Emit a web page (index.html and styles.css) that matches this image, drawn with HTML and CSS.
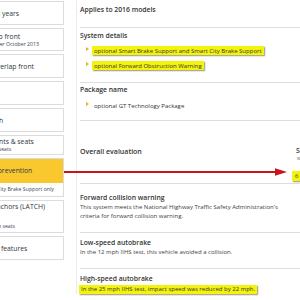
FILE: index.html
```html
<!DOCTYPE html>
<html lang="en">
<head>
<meta charset="utf-8">
<title>Front crash prevention</title>
<link rel="stylesheet" href="styles.css">
</head>
<body>
<div class="page">
  <nav class="sidebar">
    <div class="card"><div class="nav-title">Other model years</div></div>
    <div class="card two"><div class="nav-title">Small overlap front</div><div class="nav-sub">Vehicles built after October 2013</div></div>
    <div class="card"><div class="nav-title">Moderate overlap front</div></div>
    <div class="card"><div class="nav-title">Side</div></div>
    <div class="card"><div class="nav-title">Roof strength</div></div>
    <div class="card two short"><div class="nav-title">Head restraints &amp; seats</div><div class="nav-sub">Applies to front seats</div></div>
    <div class="card active">
      <div class="nav-head">Front crash prevention</div>
      <div class="nav-body"><div class="nav-sub">optional Smart City Brake Support only</div></div>
    </div>
    <div class="card latch"><div class="nav-title">Child seat anchors (LATCH)</div><div class="nav-sub tall">Ease of use</div><div class="nav-sub tall">2nd-row position seats</div></div>
    <div class="card"><div class="nav-title">Other safety features</div></div>
  </nav>

  <main class="content">
    <section class="sec sec-applies">
      <h2 class="heading">Applies to 2016 models</h2>
    </section>
    <section class="sec sec-details">
      <h3 class="heading">System details</h3>
      <ul class="items">
        <li><mark class="hl">optional Smart Brake Support and Smart City Brake Support</mark></li>
        <li><mark class="hl">optional Forward Obstruction Warning</mark></li>
      </ul>
    </section>
    <section class="sec sec-package">
      <h3 class="heading">Package name</h3>
      <ul class="items">
        <li><span class="plain">optional GT Technology Package</span></li>
      </ul>
    </section>
    <section class="sec sec-eval">
      <h3 class="heading eval-title">Overall evaluation</h3>
      <div class="rating">
        <div class="rating-title">Superior</div>
        <div class="rating-sub">with optional equipment</div>
        <mark class="hl score">6 points</mark>
      </div>
    </section>
    <section class="sec sec-fcw">
      <h3 class="heading">Forward collision warning</h3>
      <p class="body">This system meets the National Highway Traffic Safety Administration's criteria for forward collision warning.</p>
    </section>
    <section class="sec sec-low">
      <h3 class="heading">Low-speed autobrake</h3>
      <p class="body">In the 12 mph IIHS test, this vehicle avoided a collision.</p>
    </section>
    <section class="sec sec-high">
      <h3 class="heading">High-speed autobrake</h3>
      <p class="body tall"><mark class="hl">In the 25 mph IIHS test, impact speed was reduced by 22 mph.</mark></p>
    </section>
  </main>
</div>

<svg class="annotation" width="300" height="300" viewBox="0 0 300 300" aria-hidden="true">
  <line x1="64" y1="172" x2="279" y2="172" stroke="#c8161c" stroke-width="2"/>
  <polygon points="275,168.3 287,172 275,175.7" fill="#c8161c"/>
</svg>
</body>
</html>
```

FILE: styles.css
```css
* {
  box-sizing: border-box;
  margin: 0;
  padding: 0;
}

html,
body {
  width: 300px;
  height: 300px;
  overflow: hidden;
  background: #ffffff;
}

body {
  position: relative;
  font-family: "Open Sans", "Liberation Sans", sans-serif;
  color: #333333;
}

.page {
  display: flex;
  align-items: flex-start;
}

/* ---------- sidebar ---------- */
.sidebar {
  flex: none;
  width: 111px;
  margin-left: -47px;
  padding-top: 1px;
  display: flex;
  flex-direction: column;
  gap: 3px;
}

.card {
  min-height: 24px;
  padding: 0 6px;
  border: 1px solid #dcdcdc;
  background: #ffffff;
  display: flex;
  flex-direction: column;
  justify-content: center;
  white-space: nowrap;
  overflow: hidden;
}

.card.two {
  min-height: 23px;
}

.card.short {
  min-height: 20px;
}

.nav-title {
  font-size: 6.8px;
  line-height: 9px;
  color: #2f3742;
}

.nav-sub {
  font-size: 5.2px;
  line-height: 7px;
  color: #3a4450;
}

.nav-sub.tall {
  line-height: 10px;
}

.card.active {
  min-height: 39px;
  padding: 0;
  justify-content: flex-start;
}

.nav-head {
  height: 24px;
  padding: 0 6px;
  background: #f9c82e;
  font-size: 6.8px;
  line-height: 24px;
  color: #2f3742;
}

.nav-body {
  height: 13px;
  padding: 0 6px;
  display: flex;
  align-items: center;
}

.card.latch {
  min-height: 33px;
}

/* ---------- main content ---------- */
.content {
  flex: none;
  width: 260px;
  margin-left: 12px;
  padding-left: 3px;
  border-left: 1px solid #ececec;
}

.sec {
  border-bottom: 1px solid #dedede;
}

.heading {
  font-size: 6.8px;
  line-height: 10px;
  font-weight: 600;
  color: #333333;
}

.sec-applies {
  padding: 5px 0 12px;
}

.sec-details {
  padding: 3px 0 9px;
}

.sec-details .items {
  margin-top: 2px;
}

.sec-package {
  padding: 2px 0 7px;
}

.sec-package .items {
  margin-top: 3px;
}

.items {
  list-style: none;
  padding-left: 6px;
}

.items li {
  height: 15px;
  display: flex;
  align-items: center;
  gap: 3px;
  font-size: 6px;
  color: #333333;
}

.items li::before {
  content: "";
  flex: none;
  width: 0;
  height: 0;
  border-top: 2px solid transparent;
  border-bottom: 2px solid transparent;
  border-left: 3px solid #e7b512;
  margin-top: -3px;
}

.plain {
  padding: 0 2px;
  line-height: 8px;
}

.hl {
  display: inline-block;
  padding: 0.5px 2px;
  background: #f3f30d;
  box-shadow: 1px 1px 1.2px rgba(70, 70, 0, 0.55);
  font-size: 6px;
  line-height: 8px;
  color: #333333;
  white-space: nowrap;
}

.sec-eval {
  height: 63px;
  display: flex;
  align-items: center;
}

.eval-title {
  flex: 1;
  font-size: 7px;
}

.rating {
  flex: none;
  align-self: stretch;
  width: 44px;
  padding-top: 26px;
  white-space: nowrap;
}

.rating-title {
  padding-left: 4px;
  font-size: 6.8px;
  line-height: 8px;
  font-weight: 600;
}

.rating-sub {
  padding-left: 5px;
  font-size: 4.5px;
  line-height: 6px;
  color: #666666;
}

.score {
  margin-top: 6px;
  padding: 1px 3px;
}

.sec-fcw {
  padding: 9px 0 11px;
}

.sec-low {
  padding: 5px 0 11px;
}

.sec-high {
  padding: 5px 0 0;
  border-bottom: none;
}

.body {
  max-width: 206px;
  font-size: 6px;
  line-height: 9px;
  color: #3d3d3d;
}

.body.tall {
  line-height: 10px;
  margin-left: -1px;
}

/* ---------- annotation overlay ---------- */
.annotation {
  position: absolute;
  top: 0;
  left: 0;
  pointer-events: none;
}
```
